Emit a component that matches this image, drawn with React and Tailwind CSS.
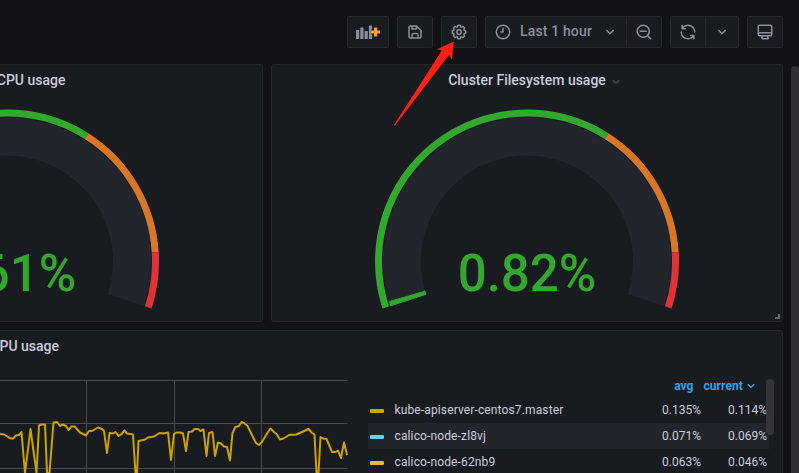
import React from "react";

const ICONS = {
  angleDown:
    "M17,9.17a1,1,0,0,0-1.41,0L12,12.71,8.46,9.17a1,1,0,0,0-1.41,0,1,1,0,0,0,0,1.42l4.24,4.24a1,1,0,0,0,1.42,0L17,10.59A1,1,0,0,0,17,9.17Z",
  searchMinus:
    "M21.71,20.29,18,16.61A9,9,0,1,0,16.61,18l3.68,3.68a1,1,0,0,0,1.42,0A1,1,0,0,0,21.71,20.29ZM11,18a7,7,0,1,1,7-7A7,7,0,0,1,11,18Zm4-8H7a1,1,0,0,0,0,2h8a1,1,0,0,0,0-2Z",
  clock:
    "M12,2A10,10,0,1,0,22,12,10,10,0,0,0,12,2Zm0,18a8,8,0,1,1,8-8A8,8,0,0,1,12,20ZM12,6a1,1,0,0,0-1,1v4H9a1,1,0,0,0,0,2h3a1,1,0,0,0,1-1V7A1,1,0,0,0,12,6Z",
  sync: "M19.91,15.51H15.38a1,1,0,0,0,0,2h2.4A8,8,0,0,1,4,12a1,1,0,1,0-2,0,10,10,0,0,0,16.88,7.23V21a1,1,0,0,0,2,0V16.5A1,1,0,0,0,19.91,15.51ZM12,2A10,10,0,0,0,5.12,4.77V3a1,1,0,0,0-2,0V7.5a1,1,0,0,0,1,1h4.5a1,1,0,0,0,0-2H6.22A8,8,0,0,1,20,12a1,1,0,0,0,2,0A10,10,0,0,0,12,2Z",
  save: "M20.71,9.29l-6-6a1,1,0,0,0-.32-.21A1.09,1.09,0,0,0,14,3H6A3,3,0,0,0,3,6V18a3,3,0,0,0,3,3H18a3,3,0,0,0,3-3V10A1,1,0,0,0,20.71,9.29ZM9,5h4V7H9Zm6,14H9V16a1,1,0,0,1,1-1h4a1,1,0,0,1,1,1Zm4-1a1,1,0,0,1-1,1H17V16a3,3,0,0,0-3-3H10a3,3,0,0,0-3,3v3H6a1,1,0,0,1-1-1V6A1,1,0,0,1,6,5H7V8A1,1,0,0,0,8,9h6a1,1,0,0,0,1-1V6.41l4,4Z",
  monitor:
    "M19,2H5A3,3,0,0,0,2,5V15a3,3,0,0,0,3,3H7.64l-.58,1a2,2,0,0,0,0,2,2,2,0,0,0,1.75,1h6.46A2,2,0,0,0,17,21a2,2,0,0,0,0-2l-.59-1H19a3,3,0,0,0,3-3V5A3,3,0,0,0,19,2ZM8.77,20,10,18H14l1.2,2ZM20,15a1,1,0,0,1-1,1H5a1,1,0,0,1-1-1V14H20Zm0-3H4V5A1,1,0,0,1,5,4H19a1,1,0,0,1,1,1Z",
  cog: "M21.32,9.55l-1.89-.63.89-1.78A1,1,0,0,0,20.13,6L18,3.87a1,1,0,0,0-1.15-.19l-1.78.89-.63-1.89A1,1,0,0,0,13.5,2h-3a1,1,0,0,0-.95.68L8.92,4.57,7.14,3.68A1,1,0,0,0,6,3.87L3.87,6a1,1,0,0,0-.19,1.15l.89,1.78-1.89.63A1,1,0,0,0,2,10.5v3a1,1,0,0,0,.68.95l1.89.63-.89,1.78A1,1,0,0,0,3.87,18L6,20.13a1,1,0,0,0,1.15.19l1.78-.89.63,1.89a1,1,0,0,0,.95.68h3a1,1,0,0,0,.95-.68l.63-1.89,1.78.89A1,1,0,0,0,18,20.13L20.13,18a1,1,0,0,0,.19-1.15l-.89-1.78,1.89-.63A1,1,0,0,0,22,13.5v-3A1,1,0,0,0,21.32,9.55ZM20,12.78l-1.2.4A2,2,0,0,0,17.64,16l.57,1.14-1.1,1.1L16,17.64a2,2,0,0,0-2.79,1.16l-.4,1.2H11.22l-.4-1.2A2,2,0,0,0,8,17.64l-1.14.57-1.1-1.1L6.36,16A2,2,0,0,0,5.2,13.18L4,12.78V11.22l1.2-.4A2,2,0,0,0,6.36,8L5.79,6.89l1.1-1.1L8,6.36A2,2,0,0,0,10.82,5.2l.4-1.2h1.56l.4,1.2A2,2,0,0,0,16,6.36l1.14-.57,1.1,1.1L17.64,8a2,2,0,0,0,1.16,2.79l1.2.4ZM12,8a4,4,0,1,0,4,4A4,4,0,0,0,12,8Zm0,6a2,2,0,1,1,2-2A2,2,0,0,1,12,14Z",
};

function Icon({ name, className = "size-[18px]" }) {
  return (
    <svg viewBox="0 0 24 24" fill="currentColor" className={"shrink-0 " + className}>
      <path d={ICONS[name]} />
    </svg>
  );
}

function ToolButton({ className = "", children }) {
  return (
    <button
      className={
        "flex h-8 items-center justify-center border border-[#26282d] bg-[#181b1f] text-[#8e8e99] " + className
      }
    >
      {children}
    </button>
  );
}

function AddPanelIcon() {
  return (
    <svg viewBox="0 0 24 14" className="h-[14px] w-6">
      <g fill="#8e8e99">
        <rect x="0" y="5" width="3.2" height="9" rx="0.6" />
        <rect x="4.3" y="2.5" width="3.2" height="11.5" rx="0.6" />
        <rect x="8.6" y="6" width="3.2" height="8" rx="0.6" />
        <path d="M12.9,1a.6.6,0,0,1,.6-.6h2.1a.6.6,0,0,1,.6.6V4.6H15v4.6h1.2V13.4a.6.6,0,0,1-.6.6H13.5a.6.6,0,0,1-.6-.6Z" />
      </g>
      <path d="M18,2.6h3.2V5.4h3V8.6h-3v3h-3.2v-3h-3V5.4h3Z" fill="#f9a02c" />
    </svg>
  );
}

function Toolbar() {
  return (
    <header className="flex h-16 shrink-0 items-center justify-end gap-2 pr-4">
      <ToolButton className="w-[42px] rounded-[2px]">
        <AddPanelIcon />
      </ToolButton>
      <ToolButton className="w-9 rounded-[2px]">
        <Icon name="save" />
      </ToolButton>
      <ToolButton className="w-9 rounded-[2px]">
        <Icon name="cog" />
      </ToolButton>
      <div className="flex">
        <ToolButton className="w-[142px] rounded-l-[2px] text-sm font-medium">
          <Icon name="clock" />
          <span className="ml-2 whitespace-nowrap pb-0.5 tracking-[0.15px]">Last 1 hour</span>
          <Icon name="angleDown" className="-mr-px ml-[9px] size-[18px]" />
        </ToolButton>
        <ToolButton className="-ml-px w-9 rounded-r-[2px]">
          <Icon name="searchMinus" />
        </ToolButton>
      </div>
      <div className="flex">
        <ToolButton className="w-9 rounded-l-[2px]">
          <Icon name="sync" />
        </ToolButton>
        <ToolButton className="-ml-px w-[34px] rounded-r-[2px]">
          <Icon name="angleDown" />
        </ToolButton>
      </div>
      <ToolButton className="w-9 rounded-[2px]">
        <Icon name="monitor" />
      </ToolButton>
    </header>
  );
}

const CX = 255;
const CY = 168.5;

// Angles are in degrees, clockwise from twelve o'clock.
function ring(r0, r1, a0, a1) {
  const p = (r, a) => {
    const t = (a * Math.PI) / 180;
    return (CX + r * Math.sin(t)).toFixed(2) + "," + (CY - r * Math.cos(t)).toFixed(2);
  };
  const large = a1 - a0 > 180 ? 1 : 0;
  return `M${p(r1, a0)}A${r1},${r1},0,${large},1,${p(r1, a1)}L${p(r0, a1)}A${r0},${r0},0,${large},0,${p(r0, a0)}Z`;
}

function Gauge({ value, fill }) {
  return (
    <svg viewBox="0 0 510 228" className="h-[228px] w-[510px]">
      <path d={ring(106, 144, -108, 108)} fill="#22252b" />
      <path d={ring(106.3, 143.3, -108, -108 + 216 * fill)} fill="#32a82d" stroke="#32a82d" strokeWidth="1" />
      <path d={ring(145, 152, -108, 32.4)} fill="#32a82d" />
      <path d={ring(145, 152, 32.4, 86.4)} fill="#d87727" />
      <path d={ring(145, 152, 86.4, 108)} fill="#e03333" />
      <text x={CX} y="198" textAnchor="middle" fill="#32a82d" className="text-[51px] font-medium">
        {value}
      </text>
    </svg>
  );
}

function Panel({ title, menu, className, children }) {
  return (
    <section className={"flex shrink-0 flex-col rounded-[3px] border border-[#25272c] bg-[#181b1f] " + className}>
      <h2 className="flex h-7 shrink-0 items-center justify-center pt-0.5 text-sm font-medium text-[#ccccdc]">
        <span className="relative whitespace-nowrap">
          {title}
          {menu && <Icon name="angleDown" className="absolute top-[4px] left-full ml-0.5 size-4 text-[#47494f]" />}
        </span>
      </h2>
      {children}
    </section>
  );
}

const SERIES =
  "0,434 4,434.5 8,437 11,438.5 13,438.5 16,435.5 19,435 21.5,432 25,473 30.5,429 36.5,473 39,425.5 41,424.5 45,424.5 47,473 49.5,473 53.5,422.5 57,422 60,426 63,424.5 66,426 68.5,430 71.5,426.5 74.5,426.5 80,432.5 86,435.5 89,431 92,431 98,427.5 102,429 104,431 107,453 109.5,433 113,433.5 115.5,432 118.5,436 121,434.5 124.5,430.5 127,433.5 133,434.5 135.5,473 137,473 138.5,441 145,439.5 148,437.5 154,436.5 159.5,433 163,433.5 168,432.5 171,460 174,434 176.5,432.5 180.5,432.5 183,433.5 186,451 188.5,432 192,431.5 194.5,429 198,429 200.5,431 203.5,429.5 206.5,456 209,433 212.5,432 215,456 218,442.5 221,443.5 224,446.5 227,447 230,460.5 232.5,433 235.5,427 239,426 241.5,422 244,423 247.5,426 256,443 259,445 262,442 267,433.5 270.5,428.5 274,432 276.5,434 280,439.5 283.5,438.5 289,435 296,434.5 302,432 308.5,429 312,433 314.5,434.5 316.5,473 318.5,473 320.5,437 323,438.5 326.5,439 332,452 335.5,452 338,450.5 341,458 344,442.5 347,455";

function UsageGraph() {
  return (
    <svg viewBox="0 359 348 114" className="h-[114px] w-[348px] shrink-0">
      <g stroke="#494b4e" strokeWidth="1">
        <path d="M0,380.5H347.5M0,423.5H347.5M0,468.5H347.5" />
        <path d="M86.5,380V473M174.5,380V473M261.5,380V473" />
      </g>
      <polyline points={SERIES} fill="none" stroke="#cca300" strokeWidth="2" strokeLinejoin="round" />
    </svg>
  );
}

const ROWS = [
  { name: "kube-apiserver-centos7.master", avg: "0.135%", current: "0.114%", swatch: "bg-[#cca300]", row: "" },
  { name: "calico-node-zl8vj", avg: "0.071%", current: "0.069%", swatch: "bg-[#6ed0e0]", row: "bg-[#22252b]" },
  { name: "calico-node-62nb9", avg: "0.063%", current: "0.046%", swatch: "bg-[#eab839]", row: "" },
];

function Legend() {
  return (
    <div className="relative ml-5 w-[401px] shrink-0 pt-[14px] text-xs text-[#ccccdc]">
      <div className="flex h-6 items-center justify-end pt-0.5 font-bold text-[#33a2e5]">
        <span>avg</span>
        <span className="ml-[10px] tracking-[0.1px]">current</span>
        <Icon name="angleDown" className="mr-2.5 size-4" />
      </div>
      {ROWS.map((r) => (
        <div key={r.name} className={"flex h-[26px] items-center pr-0.5 pl-0.5 " + r.row}>
          <span className={"mt-0.5 h-1 w-[14px] rounded-[1px] " + r.swatch} />
          <span className="ml-[10.5px] flex-1 tracking-[0.13px]">{r.name}</span>
          <span className="w-[66px] text-right">{r.avg}</span>
          <span className="w-[66px] text-right">{r.current}</span>
        </div>
      ))}
      <div className="absolute top-5 right-[-5px] h-14 w-2 rounded-[4px] bg-[#393a3f]/90" />
    </div>
  );
}

function Arrow() {
  return (
    <svg viewBox="0 0 799 473" className="pointer-events-none absolute inset-0 h-[473px] w-[799px]">
      <path d="M453.8,41.5L437,49.3L442,50.3L393.8,125.2Q394,126.2,395,125.6L448.8,55.3L452,59.5Z" fill="#ff2012" />
    </svg>
  );
}

export default function App() {
  return (
    <div className="relative flex h-[473px] w-[799px] flex-col overflow-hidden bg-[#111217] font-['Roboto',sans-serif]">
      <Toolbar />
      <div className="flex min-h-0 flex-1 justify-between">
        <main className="flex w-[783px] flex-col items-end gap-2 overflow-hidden">
          <div className="flex shrink-0 justify-end gap-2">
            <Panel title="Cluster CPU usage" className="h-[258px] w-[512px]">
              <Gauge value="0.61%" fill={0.0061} />
            </Panel>
            <Panel title="Cluster Filesystem usage" menu className="relative h-[258px] w-[512px]">
              <Gauge value="0.82%" fill={0.0082} />
              <span className="absolute right-[2px] bottom-[2px] size-[5px] border-r-2 border-b-2 border-[#686a6e]" />
            </Panel>
          </div>
          <Panel title="Pods CPU usage" className="h-[260px] w-[1552px]">
            <div className="flex justify-end pr-[13px]">
              <UsageGraph />
              <Legend />
            </div>
          </Panel>
        </main>
        <div className="mt-0.5 w-2 rounded-t-[4px] bg-[#2e2f34]" />
      </div>
      <Arrow />
    </div>
  );
}
